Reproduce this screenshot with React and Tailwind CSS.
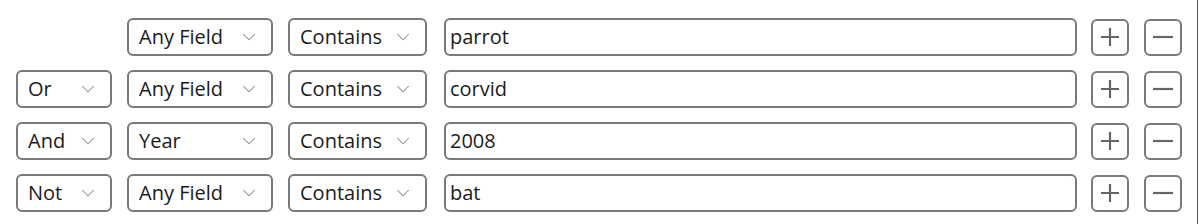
import { ChevronDown } from 'lucide-react';

const rows = [
  { op: null, field: 'Any Field', cond: 'Contains', value: 'parrot' },
  { op: 'Or', field: 'Any Field', cond: 'Contains', value: 'corvid' },
  { op: 'And', field: 'Year', cond: 'Contains', value: '2008' },
  { op: 'Not', field: 'Any Field', cond: 'Contains', value: 'bat' },
];

function Dropdown({ label, width }) {
  return (
    <div
      className={`${width} h-[38px] shrink-0 flex items-center justify-between pl-[10px] pr-[11px] border-2 border-[#7a7a7a] rounded-[6px] bg-white`}
    >
      <span className="text-[20px] text-[#1b1b1b] leading-none">{label}</span>
      <ChevronDown className="w-[22px] h-[22px] text-[#8a8a8a]" strokeWidth={1.1} />
    </div>
  );
}

function IconButton({ children }) {
  return (
    <button className="w-[38px] h-[37px] shrink-0 flex items-center justify-center border-2 border-[#7a7a7a] rounded-[6px] bg-white">
      <svg width="24" height="24" viewBox="0 0 24 24" fill="none" stroke="#666" strokeWidth="2.2" strokeLinecap="butt">
        {children}
      </svg>
    </button>
  );
}

export default function App() {
  return (
    <div className="w-[1198px] h-[224px] bg-white border-r border-[#555] font-['Open_Sans',sans-serif]">
      <div className="flex flex-col gap-[14px] pt-[18px] pl-[16px]">
        {rows.map((row, idx) => (
          <div key={idx} className="flex items-center">
            {row.op ? (
              <Dropdown label={row.op} width="w-[96px]" />
            ) : (
              <div className="w-[96px] shrink-0" />
            )}
            <div className="ml-[15px]">
              <Dropdown label={row.field} width="w-[146px]" />
            </div>
            <div className="ml-[15px]">
              <Dropdown label={row.cond} width="w-[139px]" />
            </div>
            <div className="ml-[17px] w-[633px] h-[38px] shrink-0 flex items-center pl-[4px] border-2 border-[#7a7a7a] rounded-[6px] bg-white">
              <span className="text-[20px] text-[#1b1b1b] leading-none">{row.value}</span>
            </div>
            <div className="ml-[14px]">
              <IconButton>
                <path d="M12 3v18M3 12h18" />
              </IconButton>
            </div>
            <div className="ml-[15px]">
              <IconButton>
                <path d="M2 12h20" />
              </IconButton>
            </div>
          </div>
        ))}
      </div>
    </div>
  );
}
